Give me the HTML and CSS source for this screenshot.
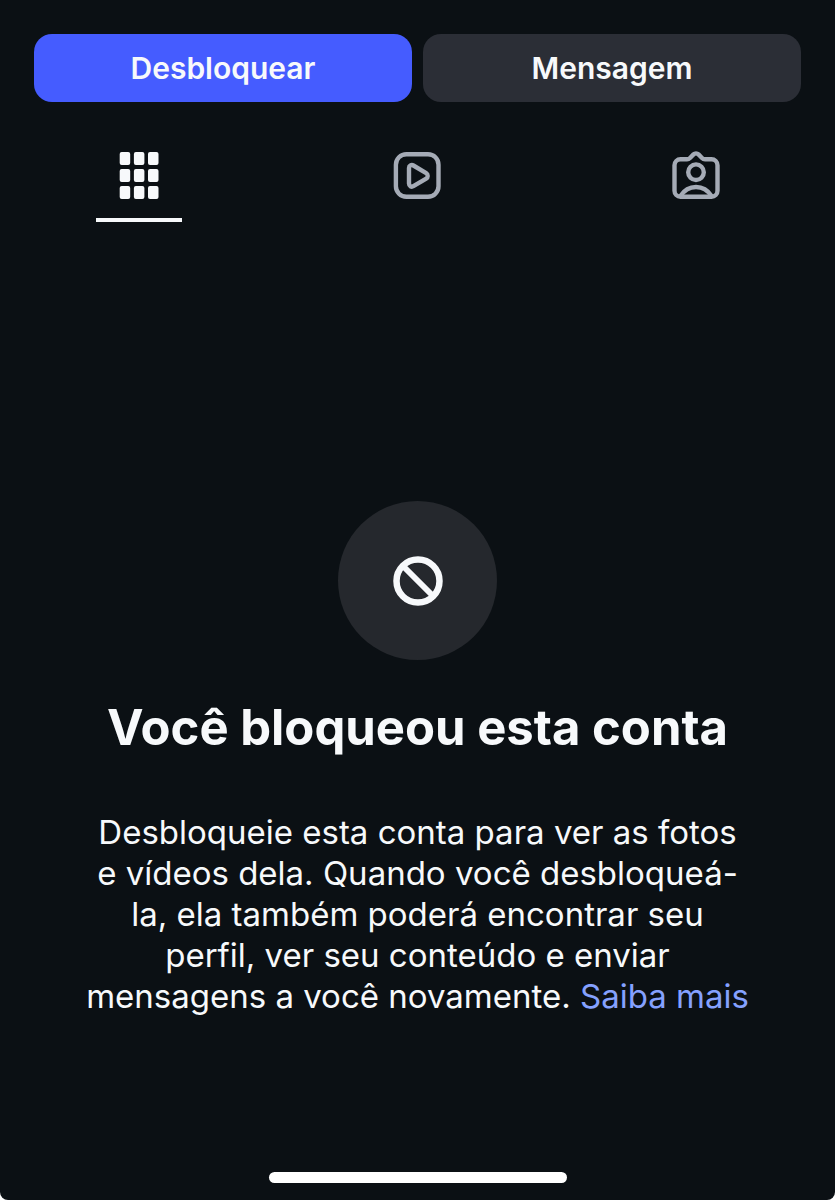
FILE: index.html
```html
<!DOCTYPE html>
<html lang="pt-BR">
<head>
  <meta charset="UTF-8">
  <meta name="viewport" content="width=device-width, initial-scale=1.0">
  <title>Conta bloqueada</title>
  <link rel="stylesheet" href="styles.css">
</head>
<body>
  <div class="screen">
    <div class="actions">
      <button type="button" class="btn btn-primary">Desbloquear</button>
      <button type="button" class="btn">Mensagem</button>
    </div>

    <nav class="tabs">
      <a href="#posts" class="tab active" aria-label="Publicações">
        <svg class="icon" viewBox="0 0 48 48" fill="currentColor">
          <rect x="4.700" y="0" width="10.500" height="13" rx="2"/>
          <rect x="18.900" y="0" width="10.500" height="13" rx="2"/>
          <rect x="33" y="0" width="10.500" height="13" rx="2"/>
          <rect x="4.700" y="17" width="10.500" height="13" rx="2"/>
          <rect x="18.900" y="17" width="10.500" height="13" rx="2"/>
          <rect x="33" y="17" width="10.500" height="13" rx="2"/>
          <rect x="4.700" y="34" width="10.500" height="13" rx="2"/>
          <rect x="18.900" y="34" width="10.500" height="13" rx="2"/>
          <rect x="33" y="34" width="10.500" height="13" rx="2"/>
        </svg>
      </a>
      <a href="#reels" class="tab" aria-label="Reels">
        <svg class="icon" viewBox="0 0 48 48" fill="none" stroke="currentColor" stroke-width="4.400" stroke-linejoin="round">
          <rect x="2.900" y="2.200" width="42.600" height="42.600" rx="10.500"/>
          <path d="M16 16v15.600c0 2.400 2.400 3.800 4.400 2.600l12.800-7.600c2-1.200 2-4.200 0-5.400l-12.800-7.700c-2-1.200-4.400.2-4.400 2.500z"/>
        </svg>
      </a>
      <a href="#tagged" class="tab" aria-label="Marcações">
        <svg class="icon" viewBox="0 0 48 48" fill="none" stroke="currentColor" stroke-width="4.400" stroke-linejoin="round">
          <path d="M8.500 7.200H15c1.200 0 2.200-.4 3-1.200l3.500-3.600c1.400-1.400 3.600-1.400 5 0L30 6c.8.8 1.800 1.200 3 1.200h6.500a6 6 0 0 1 6 6v25.600a6 6 0 0 1-6 6h-31a6 6 0 0 1-6-6V13.200a6 6 0 0 1 6-6z"/>
          <circle cx="24" cy="20.200" r="7.800"/>
          <path d="M8.500 44C12 38.500 17.600 35 24 35s12 3.500 15.500 9"/>
        </svg>
      </a>
    </nav>

    <main class="empty">
      <div class="badge">
        <svg class="badge-icon" viewBox="0 0 50 50" fill="none" stroke="currentColor">
          <circle cx="25" cy="25" r="21.500" stroke-width="6.500"/>
          <path d="M10 10l30 30" stroke-width="6"/>
        </svg>
      </div>
      <h1>Você bloqueou esta conta</h1>
      <p>Desbloqueie esta conta para ver as fotos e vídeos dela. Quando você desbloqueá-la, ela também poderá encontrar seu perfil, ver seu conteúdo e enviar mensagens a você novamente. <a href="#saiba-mais">Saiba mais</a></p>
    </main>

    <div class="home-bar"></div>
  </div>
</body>
</html>
```

FILE: styles.css
```css
* {
  box-sizing: border-box;
}
body {
  margin: 0;
  background: #fff;
  color: #f7f9fb;
  font-family: Inter, "Liberation Sans", sans-serif;
}
.screen {
  display: flex;
  flex-direction: column;
  min-height: 100vh;
  padding-bottom: 17px;
  background: #0b1014;
  border-radius: 0 0 8px 8px;
}
.actions {
  display: flex;
  gap: 11px;
  padding: 34px 34px 0;
}
.btn {
  flex: 1;
  height: 68px;
  padding: 0;
  border: none;
  border-radius: 18px;
  background: #2b2e36;
  color: inherit;
  font-family: inherit;
  font-size: 30px;
  font-weight: 600;
  cursor: pointer;
}
.btn-primary {
  background: #455cff;
}
.tabs {
  display: flex;
  justify-content: space-around;
  padding-top: 50px;
}
.tab {
  display: flex;
  justify-content: center;
  width: 86px;
  height: 70px;
  color: #a5abb6;
  border-bottom: 4px solid transparent;
}
.tab.active {
  color: #f7f9fb;
  border-bottom-color: #f7f9fb;
}
.icon {
  width: 48px;
  height: 48px;
  overflow: visible;
}
.empty {
  flex: 1;
  display: flex;
  flex-direction: column;
  align-items: center;
  justify-content: center;
  padding: 124px 80px 0;
  text-align: center;
}
.badge {
  display: flex;
  align-items: center;
  justify-content: center;
  width: 159px;
  height: 159px;
  border-radius: 50%;
  background: #25282d;
}
.badge-icon {
  width: 50px;
  height: 50px;
}
h1 {
  margin: 36px 0 52px;
  font-size: 49px;
  line-height: 64px;
  font-weight: 700;
}
p {
  max-width: 665px;
  margin: 0;
  font-size: 33px;
  line-height: 41px;
}
p a {
  color: #85a1ff;
  text-decoration: none;
}
.home-bar {
  align-self: center;
  width: 298px;
  height: 11px;
  border-radius: 6px;
  background: #fff;
}
```
